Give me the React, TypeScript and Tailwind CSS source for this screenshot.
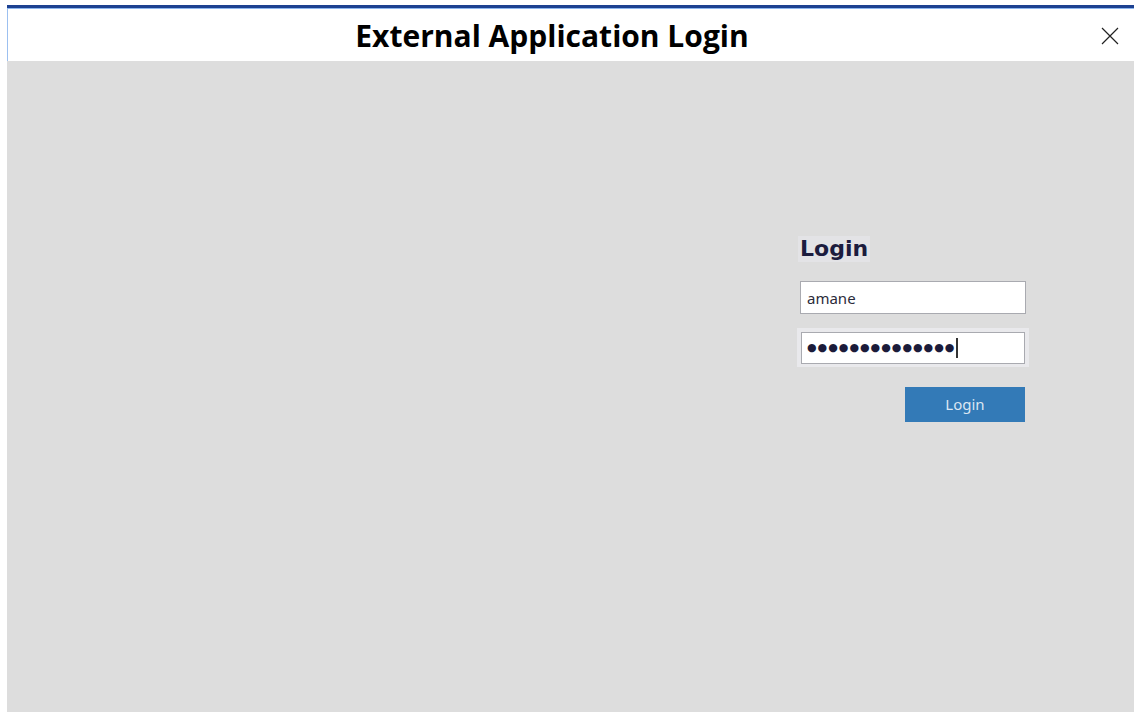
export default function App() {
  return (
    <div className="w-[1134px] h-[713px] bg-white pt-[5px] pl-[7px] overflow-hidden">
      <div className="flex flex-col h-[707px]">
        {/* title bar */}
        <div className="h-[3px] bg-[#1d4191]" />
        <div className="h-[1px] bg-[#8db6ee]" />
        <div className="relative h-[52px] border-l border-[#9cc0f0] flex items-center justify-center pr-[38px]">
          <h1
            className="text-[30px] font-bold text-black tracking-[0px]"
            style={{ fontFamily: '"Open Sans", "Noto Sans", sans-serif' }}
          >
            External Application Login
          </h1>
          <button className="absolute right-[15px] top-[18px] w-[18px] h-[18px]">
            <svg viewBox="0 0 18 18" className="w-[18px] h-[18px]">
              <path d="M1 1 L17 17 M17 1 L1 17" stroke="#222" strokeWidth="1.2" />
            </svg>
          </button>
        </div>

        {/* body */}
        <div className="flex-1 bg-[#dddddd] flex justify-end pr-[108px]">
          <form className="w-[226px] pt-[175px] flex flex-col" onSubmit={(e) => e.preventDefault()}>
            <div className="self-start ml-[-2px] px-[2px] bg-[#e3e3e6]">
              <h2
                className="text-[22px] leading-[26px] font-bold text-[#1c1c3e]"
                style={{ fontFamily: '"DejaVu Sans", Verdana, sans-serif' }}
              >
                Login
              </h2>
            </div>
            <input
              defaultValue="amane"
              className="mt-[19px] w-[226px] h-[33px] bg-white border border-[#a9aab0] px-[6px] text-[15px] text-[#2b2b3a] outline-none"
              style={{ fontFamily: '"Noto Sans", "Open Sans", sans-serif' }}
            />
            <div className="mt-[14px] ml-[-3px] w-[232px] p-[4px] pb-[3px] bg-[#e9e9ec]">
              <div className="h-[32px] bg-white border border-[#a9aab0] flex items-center pl-[5px]">
                <span className="text-[11px] tracking-[1px] text-[#1b1b3a]" style={{ fontFamily: '"DejaVu Sans", sans-serif' }}>
                  ●●●●●●●●●●●●●●
                </span>
                <span className="ml-[1px] w-[2px] h-[20px] bg-[#333]" />
              </div>
            </div>
            <button
              type="submit"
              className="mt-[20px] self-end mr-[1px] w-[120px] h-[35px] bg-[#337ab7] text-[#dbe6f2] text-[15px]"
              style={{ fontFamily: '"Noto Sans", "Open Sans", sans-serif' }}
            >
              Login
            </button>
          </form>
        </div>
      </div>
    </div>
  );
}
